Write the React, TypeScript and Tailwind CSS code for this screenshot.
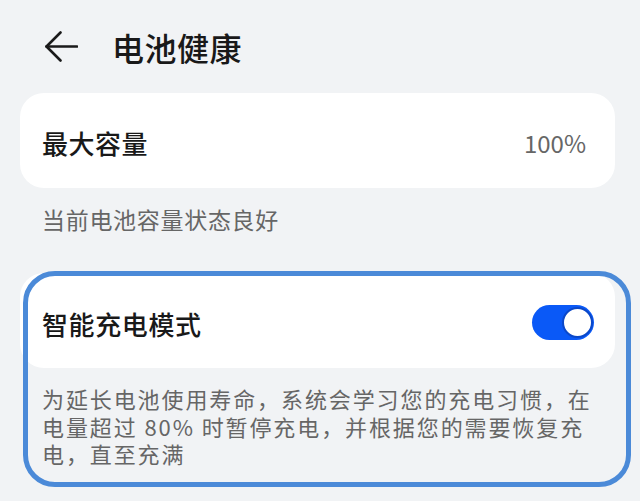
import React from "react";

export default function App() {
  return (
    <div
      className="w-[640px] h-[501px] overflow-hidden bg-[#f1f3f5] text-[#191919]"
      style={{ fontFamily: '"Noto Sans CJK SC", "Noto Sans", sans-serif' }}
    >
      {/* Header */}
      <div className="h-[93px] flex items-center pl-[45px]">
        <svg width="33" height="31" viewBox="0 0 33 31" fill="none" className="shrink-0">
          <path d="M1.5 15.5H32" stroke="#1a1a1a" strokeWidth="2.6" strokeLinecap="round" />
          <path d="M15.5 1.5L1.5 15.5L15.5 29.5" stroke="#1a1a1a" strokeWidth="2.6" strokeLinecap="round" strokeLinejoin="round" />
        </svg>
        <div className="ml-[34px] text-[32px] leading-[40px] font-medium tracking-[0.5px]">电池健康</div>
      </div>

      {/* Card 1 */}
      <div className="ml-[20px] w-[595px] h-[95px] rounded-[24px] bg-white flex items-center justify-between pl-[22px] pr-[29px]">
        <div className="text-[26px] leading-[34px] font-medium tracking-[0.5px] pt-[4px]">最大容量</div>
        <div className="text-[24px] leading-[30px] text-[#666666] pt-[4px]">100%</div>
      </div>
      <div className="mt-[16px] pl-[42px] text-[23px] leading-[30px] text-[#666666] tracking-[0.7px]">
        当前电池容量状态良好
      </div>

      {/* Card 2 with highlight */}
      <div className="relative ml-[20px] w-[595px] mt-[39px]">
        <div className="h-[95px] rounded-[24px] bg-white flex items-center justify-between pl-[22px] pr-[21px]">
          <div className="text-[26px] leading-[34px] font-medium tracking-[0.6px] pt-[6px]">智能充电模式</div>
          <div className="w-[62px] h-[35px] rounded-full bg-[#0a59f7] flex items-center justify-end pr-[1px] mt-[3px]">
            <div className="w-[31px] h-[31px] rounded-full bg-white border-[2px] border-[#0b48c9]" />
          </div>
        </div>
        <div className="mt-[17px] pl-[22px] text-[22px] leading-[27.5px] text-[#666666] tracking-[1.9px]">
          为延长电池使用寿命，系统会学习您的充电习惯，在
          <br />
          电量超过 80% 时暂停充电，并根据您的需要恢复充
          <br />
          电，直至充满
        </div>
        <div className="absolute left-[3px] top-[-2px] w-[608px] h-[216px] rounded-[32px] border-[5px] border-[#4b8ad8] pointer-events-none" />
      </div>
    </div>
  );
}
